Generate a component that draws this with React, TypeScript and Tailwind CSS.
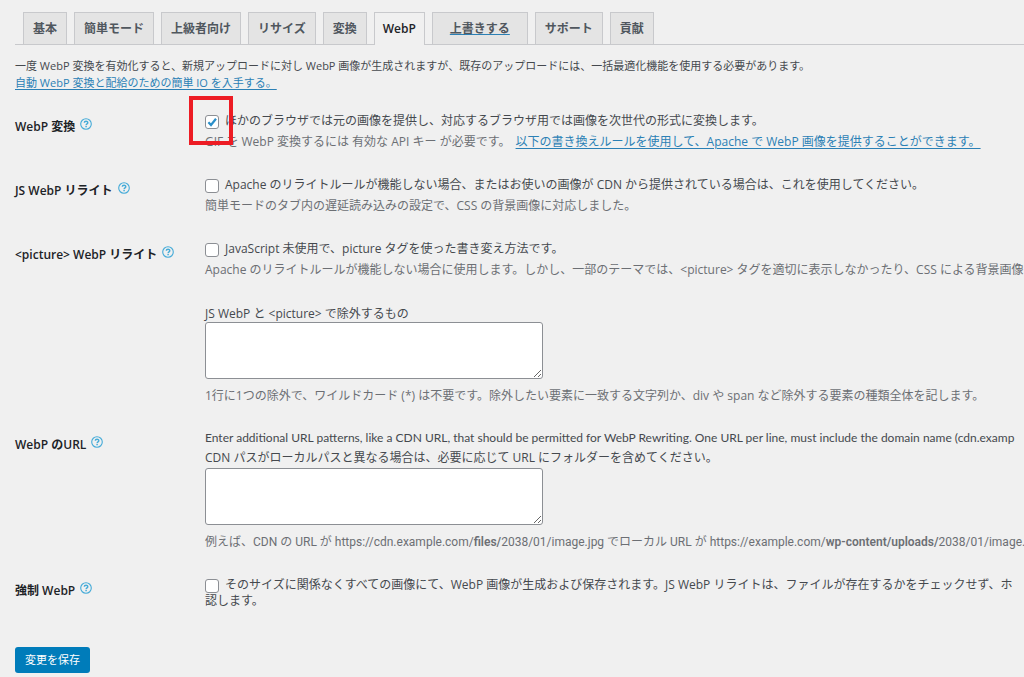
import type { ReactNode } from 'react';

const TABS = ['基本', '簡単モード', '上級者向け', 'リサイズ', '変換', 'WebP', '上書きする', 'サポート', '貢献'];

function Tab({ name }: { name: string }) {
  if (name === '上書きする') {
    return (
      <li className="border border-b-0 border-[#c8c9cc] bg-[#e4e4e4] px-[17px]">
        <a href="#override" className="text-[#50575e] underline decoration-[#2b80b5] underline-offset-1">
          {name}
        </a>
      </li>
    );
  }

  const active = name === 'WebP';
  return (
    <li
      className={
        active
          ? '-mb-px border border-b-0 border-[#c8c9cc] bg-[#f0f0f0] pb-px text-[#1d2327]'
          : 'border border-b-0 border-[#c8c9cc] bg-[#e4e4e4] px-px text-[#50575e]'
      }
    >
      <button type="button" className="px-2">
        {name}
      </button>
    </li>
  );
}

function HelpIcon() {
  return (
    <svg viewBox="0 0 12 12" className="h-3 w-3" fill="none" stroke="currentColor">
      <circle cx="6" cy="6" r="5.3" strokeWidth="1.1" />
      <path d="M4.3 4.8 C4.3 2.7 7.8 2.7 7.8 4.7 C7.8 5.9 6.1 5.9 6.1 7.2" strokeWidth="1.4" />
      <path d="M6.1 8 V9.3" strokeWidth="1.5" />
    </svg>
  );
}

interface RowProps {
  label: string;
  htmlFor: string;
  children: ReactNode;
}

/** One setting: bold label with its help link on the left, controls on the right. */
function Row({ label, htmlFor, children }: RowProps) {
  return (
    <div className="flex pb-[22px]">
      <div className="flex w-[190px] shrink-0 items-start gap-[5px] pt-[7px]">
        <label htmlFor={htmlFor} className="font-semibold leading-5 text-[#1d2327]">
          {label}
        </label>
        <a href="#help" aria-label="ヘルプ" className="pt-px text-[#45abd8]">
          <HelpIcon />
        </a>
      </div>
      <div className="min-w-0 flex-1 whitespace-nowrap">{children}</div>
    </div>
  );
}

interface CheckProps {
  id: string;
  checked?: boolean;
  children: ReactNode;
}

function Check({ id, checked, children }: CheckProps) {
  return (
    <div className="flex h-[22px] items-center gap-[6px]">
      <span className="relative mt-0.5 flex shrink-0">
        <input
          id={id}
          type="checkbox"
          defaultChecked={checked}
          className="peer h-3.5 w-3.5 appearance-none rounded-[3px] border border-[#8c8f94] bg-white"
        />
        <svg
          viewBox="0 0 14 14"
          className="pointer-events-none absolute inset-0 hidden h-3.5 w-3.5 peer-checked:block"
          fill="none"
          stroke="#2b8fc9"
          strokeWidth="2.2"
        >
          <path d="M3.4 7.2 L6 10 L11 3.8" />
        </svg>
        {checked && (
          <span className="pointer-events-none absolute -left-4 -top-[19px] h-[49px] w-11 border-4 border-[#ed1c24]" />
        )}
      </span>
      <label htmlFor={id}>{children}</label>
    </div>
  );
}

function Hint({ children }: { children: ReactNode }) {
  return <p className="leading-5 text-[#6c6f74]">{children}</p>;
}

function Area({ id }: { id: string }) {
  return (
    <textarea
      id={id}
      className="mb-[7px] block h-[57px] w-[338px] rounded-[3px] border border-[#8c8f94] bg-white px-2 py-1"
    />
  );
}

export default function App() {
  return (
    <main className="min-h-screen overflow-hidden bg-[#f0f0f0] pl-[15px] pt-3 font-['Open_Sans','Noto_Sans_CJK_JP',sans-serif] text-[12px] text-[#45494e]">
      <ul className="flex gap-[7px] border-b border-[#c8c9cc] pl-2 font-semibold leading-[31px]">
        {TABS.map((name) => (
          <Tab key={name} name={name} />
        ))}
      </ul>

      <div className="whitespace-nowrap pb-[19px] pt-3 text-[11px] leading-[17px]">
        <p>
          一度 WebP 変換を有効化すると、新規アップロードに対し WebP 画像が生成されますが、既存のアップロードには、一括最適化機能を使用する必要があります。
        </p>
        <a href="#easyio" className="text-[#2b80b5] underline underline-offset-2">
          自動 WebP 変換と配給のための簡単 IO を入手する。
        </a>
      </div>

      <form>
        <Row label="WebP 変換" htmlFor="webp">
          <Check id="webp" checked>
            ほかのブラウザでは元の画像を提供し、対応するブラウザ用では画像を次世代の形式に変換します。
          </Check>
          <Hint>
            GIF を WebP 変換するには 有効な API キー が必要です。{' '}
            <a href="#rewrite" className="ml-0.5 text-[#2b80b5] underline underline-offset-2">
              以下の書き換えルールを使用して、Apache で WebP 画像を提供することができます。
            </a>
          </Hint>
        </Row>

        <Row label="JS WebP リライト" htmlFor="js-webp">
          <Check id="js-webp">
            Apache のリライトルールが機能しない場合、またはお使いの画像が CDN から提供されている場合は、これを使用してください。
          </Check>
          <Hint>簡単モードのタブ内の遅延読み込みの設定で、CSS の背景画像に対応しました。</Hint>
        </Row>

        <Row label="<picture> WebP リライト" htmlFor="picture-webp">
          <Check id="picture-webp">JavaScript 未使用で、picture タグを使った書き変え方法です。</Check>
          <Hint>
            Apache のリライトルールが機能しない場合に使用します。しかし、一部のテーマでは、&lt;picture&gt; タグを適切に表示しなかったり、CSS による背景画像
          </Hint>
          <label htmlFor="exclusions" className="mt-[26px] block leading-4">
            JS WebP と &lt;picture&gt; で除外するもの
          </label>
          <Area id="exclusions" />
          <Hint>
            1行に1つの除外で、ワイルドカード (*) は不要です。除外したい要素に一致する文字列か、div や span など除外する要素の種類全体を記します。
          </Hint>
        </Row>

        <Row label="WebP のURL" htmlFor="webp-urls">
          <p className="font-['Lato',sans-serif] leading-5">
            Enter additional URL patterns, like a CDN URL, that should be permitted for WebP Rewriting. One URL per line, must include the domain name (cdn.examp
          </p>
          <p className="leading-5">
            CDN パスがローカルパスと異なる場合は、必要に応じて URL にフォルダーを含めてください。
          </p>
          <Area id="webp-urls" />
          <div className="font-['Roboto','Noto_Sans_CJK_JP',sans-serif]">
            <Hint>
              例えば、CDN の URL が https://cdn.example.com/<b className="font-semibold">files/</b>2038/01/image.jpg でローカル URL が
              {' '}https://example.com/<b className="font-semibold">wp-content/uploads/</b>2038/01/image.
            </Hint>
          </div>
        </Row>

        <Row label="強制 WebP" htmlFor="force-webp">
          <Check id="force-webp">
            そのサイズに関係なくすべての画像にて、WebP 画像が生成および保存されます。JS WebP リライトは、ファイルが存在するかをチェックせず、ホ
          </Check>
          <p className="-mt-[3px] leading-4">認します。</p>
        </Row>

        <button
          type="submit"
          className="mt-4 block h-[26px] rounded-[3px] bg-[#007cba] px-[10px] text-[11px] text-white"
        >
          変更を保存
        </button>
      </form>
    </main>
  );
}
